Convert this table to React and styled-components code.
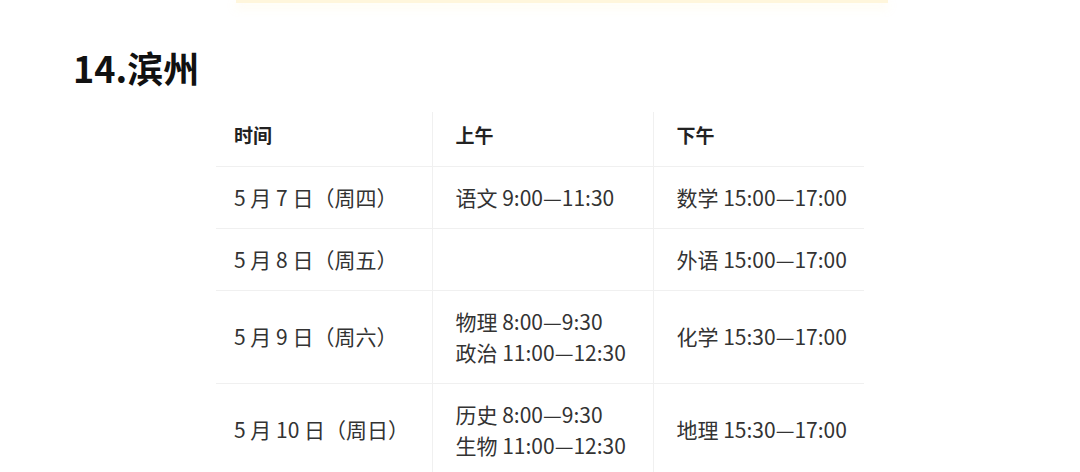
import React from 'react';
import styled, { createGlobalStyle } from 'styled-components';

const GlobalStyle = createGlobalStyle`
  html, body {
    margin: 0;
    padding: 0;
    background: #ffffff;
  }
  body {
    font-family: "Noto Sans CJK SC", "Noto Sans", sans-serif;
    color: #333333;
  }
`;

const rows = [
  { date: '5 月 7 日（周四）', am: ['语文 9:00—11:30'], pm: '数学 15:00—17:00' },
  { date: '5 月 8 日（周五）', am: [], pm: '外语 15:00—17:00' },
  { date: '5 月 9 日（周六）', am: ['物理 8:00—9:30', '政治 11:00—12:30'], pm: '化学 15:30—17:00' },
  { date: '5 月 10 日（周日）', am: ['历史 8:00—9:30', '生物 11:00—12:30'], pm: '地理 15:30—17:00' },
];

function App() {
  return (
    <Page>
      <GlobalStyle />
      <NoteBox />
      <Title>14.滨州</Title>
      <Schedule>
        <colgroup>
          <col style={{ width: 216 }} />
          <col style={{ width: 221 }} />
          <col style={{ width: 211 }} />
        </colgroup>
        <thead>
          <tr>
            <Head>时间</Head>
            <Head>上午</Head>
            <Head>下午</Head>
          </tr>
        </thead>
        <tbody>
          {rows.map((r) => (
            <tr key={r.date}>
              <Cell>{r.date}</Cell>
              <Cell>
                {r.am.map((line) => (
                  <Line key={line}>{line}</Line>
                ))}
              </Cell>
              <Cell>{r.pm}</Cell>
            </tr>
          ))}
        </tbody>
      </Schedule>
    </Page>
  );
}

export default App;

const Page = styled.div`
  width: 1080px;
  height: 472px;
  overflow: hidden;
  position: relative;
`;

const NoteBox = styled.div`
  width: 652px;
  height: 3px;
  margin-left: 236px;
  background: #fff6dc;
  box-shadow: 0 4px 10px rgba(255, 236, 170, 0.35);
`;

const Title = styled.h2`
  margin: 40px 0 0 73px;
  font-size: 36px;
  line-height: 48px;
  font-weight: 700;
  color: #111111;
`;

const Schedule = styled.table`
  margin: 21px 0 0 216px;
  width: 648px;
  border-collapse: collapse;
  table-layout: fixed;
  font-size: 21px;
  line-height: 30px;
`;

const Head = styled.th`
  height: 54px;
  padding: 0 10px 7px 23px;
  text-align: left;
  font-weight: 700;
  font-size: 19px;
  color: #222222;
  border-bottom: 1px solid #f0f0f0;
  box-sizing: border-box;
  & + & {
    border-left: 1px solid #f0f0f0;
  }
  &:first-child {
    padding-left: 18px;
  }
`;

const Cell = styled.td`
  padding: 15px 10px 16px 23px;
  vertical-align: middle;
  color: #333333;
  border-bottom: 1px solid #f0f0f0;
  white-space: nowrap;
  & + & {
    border-left: 1px solid #f0f0f0;
  }
  &:first-child {
    padding-left: 18px;
  }
`;

const Line = styled.div`
  & + & {
    margin-top: 1px;
  }
`;
